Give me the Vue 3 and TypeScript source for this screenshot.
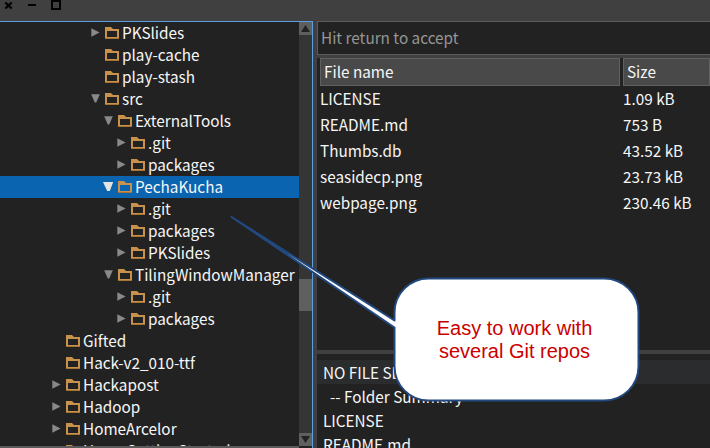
<script setup lang="ts">
interface TreeNode {
  label: string
  depth: number
  state: 'open' | 'closed' | 'leaf'
  selected?: boolean
}
interface FileEntry {
  name: string
  size: string
}

const nodes: TreeNode[] = [
  { label: 'PKSlides', depth: 3, state: 'closed' },
  { label: 'play-cache', depth: 3, state: 'leaf' },
  { label: 'play-stash', depth: 3, state: 'leaf' },
  { label: 'src', depth: 3, state: 'open' },
  { label: 'ExternalTools', depth: 4, state: 'open' },
  { label: '.git', depth: 5, state: 'closed' },
  { label: 'packages', depth: 5, state: 'closed' },
  { label: 'PechaKucha', depth: 4, state: 'open', selected: true },
  { label: '.git', depth: 5, state: 'closed' },
  { label: 'packages', depth: 5, state: 'closed' },
  { label: 'PKSlides', depth: 5, state: 'closed' },
  { label: 'TilingWindowManager', depth: 4, state: 'open' },
  { label: '.git', depth: 5, state: 'closed' },
  { label: 'packages', depth: 5, state: 'closed' },
  { label: 'Gifted', depth: 0, state: 'leaf' },
  { label: 'Hack-v2_010-ttf', depth: 0, state: 'leaf' },
  { label: 'Hackapost', depth: 0, state: 'closed' },
  { label: 'Hadoop', depth: 0, state: 'closed' },
  { label: 'HomeArcelor', depth: 0, state: 'closed' },
  { label: 'HomeGettingStarted', depth: 0, state: 'leaf' },
]

const files: FileEntry[] = [
  { name: 'LICENSE', size: '1.09 kB' },
  { name: 'README.md', size: '753 B' },
  { name: 'Thumbs.db', size: '43.52 kB' },
  { name: 'seasidecp.png', size: '23.73 kB' },
  { name: 'webpage.png', size: '230.46 kB' },
]

const summary: string[] = ['NO FILE SELECTED', '-- Folder Summary', 'LICENSE', 'README.md']

const indent = (depth: number): string => `${52 + depth * 13}px`
</script>

<template>
  <div class="window">
    <header class="titlebar">
      <svg width="70" height="12" viewBox="0 0 70 12">
        <path d="M5.300 2.500L11.700 8.500M11.700 2.500L5.300 8.500" stroke="#000" stroke-width="2.200" />
        <path d="M28 4h8v2h-8z" />
        <path fill-rule="evenodd" d="M51 0h10v10h-10zM53 2v6h6v-6z" />
      </svg>
    </header>

    <main class="body">
      <section class="tree">
        <div class="nodes">
          <div
            v-for="(n, i) in nodes"
            :key="i"
            class="node"
            :class="{ selected: n.selected }"
            :style="{ paddingLeft: indent(n.depth) }"
          >
            <svg class="arrow" width="14" height="22" viewBox="0 0 14 22">
              <path v-if="n.state === 'closed'" d="M0.300 6.300L8.600 10.500L0.300 14.700z" />
              <path v-else-if="n.state === 'open' && n.selected" d="M-1 6h10.200L5.800 15H3.200z" />
              <path v-else-if="n.state === 'open'" d="M0.200 6.300h8.600L5.200 14.500H3.800z" />
            </svg>
            <svg class="folder" width="14" height="22" viewBox="0 0 14 22">
              <path fill-rule="evenodd" fill="#c8924d" d="M0 5h6l2 2h6v10H0zM2 9v6h10V9z" />
              <path fill="#a87431" d="M0 16h14v1H0z" />
            </svg>
            <span class="label">{{ n.label }}</span>
          </div>
        </div>
        <div class="scrollbar">
          <svg class="button" width="13" height="13" viewBox="0 0 13 13"><path d="M2 10L6.500 3L11 10z" /></svg>
          <div class="track"><div class="thumb"></div></div>
          <svg class="button" width="13" height="13" viewBox="0 0 13 13"><path d="M2 3L6.500 10L11 3z" /></svg>
        </div>
      </section>

      <section class="right">
        <div class="filter">Hit return to accept</div>
        <div class="table">
          <div class="row head">
            <div class="cell">File name</div>
            <div class="cell">Size</div>
          </div>
          <div v-for="f in files" :key="f.name" class="row">
            <div class="cell">{{ f.name }}</div>
            <div class="cell">{{ f.size }}</div>
          </div>
        </div>
        <div class="summary">
          <div v-for="(s, i) in summary" :key="i" class="line" :class="{ current: i === 0, inset: i === 1 }">{{ s }}</div>
        </div>
      </section>
    </main>

    <div class="callout">
      <svg width="420" height="200" viewBox="0 0 420 200">
        <path
          d="M208.500 62.500H384C403 62.500 418.500 77.500 418.500 96.500V150.500C418.500 169.500 403 184.500 384 184.500H208.500C190 184.500 174.500 169.500 174.500 150.500V111.500L11.500 1L174.500 104.500V96.500C174.500 77.500 190 62.500 208.500 62.500z"
          fill="#fff"
          stroke="#22497f"
          stroke-width="2"
          stroke-linejoin="round"
        />
      </svg>
      <p class="message">Easy to work with<br />several Git repos</p>
    </div>
  </div>
</template>

<style>
html,
body {
  margin: 0;
  overflow: hidden;
  background: #404040;
}
</style>

<style scoped>
.window {
  position: relative;
  box-sizing: border-box;
  width: 710px;
  height: 448px;
  overflow: hidden;
  display: flex;
  flex-direction: column;
  background: #404040;
  color: #f6f6f6;
  font: 15.3px/20px "Noto Sans CJK JP", "Noto Sans", sans-serif;
}
.titlebar {
  height: 21px;
  flex: none;
}
.titlebar svg {
  display: block;
}
.body {
  display: flex;
  gap: 4px;
  height: 427px;
}
.tree {
  box-sizing: border-box;
  width: 313px;
  flex: none;
  display: flex;
  border-top: 1px solid #5c9ee0;
  border-right: 1px solid #5c9ee0;
  background: #222;
  overflow: hidden;
}
.nodes {
  width: 299px;
  height: 424px;
  overflow: hidden;
  border-bottom: 2px solid #5b5b5b;
}
.node {
  box-sizing: border-box;
  height: 22px;
  display: flex;
  white-space: nowrap;
}
.node svg {
  display: block;
  flex: none;
}
.node .arrow {
  overflow: visible;
}
.node.selected {
  background: #0a64b0;
}
.arrow {
  fill: #898989;
}
.selected .arrow {
  fill: #e4e4e4;
}
.label {
  margin-left: 3px;
}
.scrollbar {
  width: 13px;
  height: 424px;
  display: flex;
  flex-direction: column;
  background: #353535;
}
.button {
  flex: none;
  display: block;
  background: #5f5f5f;
  fill: #222;
}
.track {
  flex: 1;
}
.thumb {
  height: 32px;
  margin-top: 244px;
  background: #5f5f5f;
}
.right {
  flex: 1;
  min-width: 0;
  display: flex;
  flex-direction: column;
  gap: 3px;
}
.filter {
  box-sizing: border-box;
  height: 34px;
  flex: none;
  padding: 5px 3px;
  border: 1px solid #5b5b5b;
  border-right: 0;
  background: #222;
  color: #969696;
}
.table {
  height: 292px;
  flex: none;
  background: #222;
}
.row {
  display: grid;
  grid-template-columns: 300px 1fr;
  column-gap: 3px;
  height: 26px;
  padding-left: 3px;
  line-height: 24px;
}
.head {
  height: 28px;
}
.head .cell {
  border: 1px solid #606060;
  background: #494949;
  padding-left: 3px;
}
.summary {
  margin-top: 1px;
  flex: 1;
  padding-top: 6px;
  background: #222;
  overflow: hidden;
}
.line {
  height: 24px;
  padding-left: 6px;
  line-height: 24px;
  white-space: nowrap;
}
.line.current {
  background: #2a2c2e;
}
.line.inset {
  padding-left: 13px;
}
.callout {
  position: absolute;
  left: 220px;
  top: 216px;
}
.callout svg {
  display: block;
}
.message {
  position: absolute;
  left: 175px;
  top: 101px;
  width: 239px;
  margin: 0;
  text-align: center;
  color: #cb0000;
  font: 20px/23px "Liberation Sans", Arial, sans-serif;
}
</style>
